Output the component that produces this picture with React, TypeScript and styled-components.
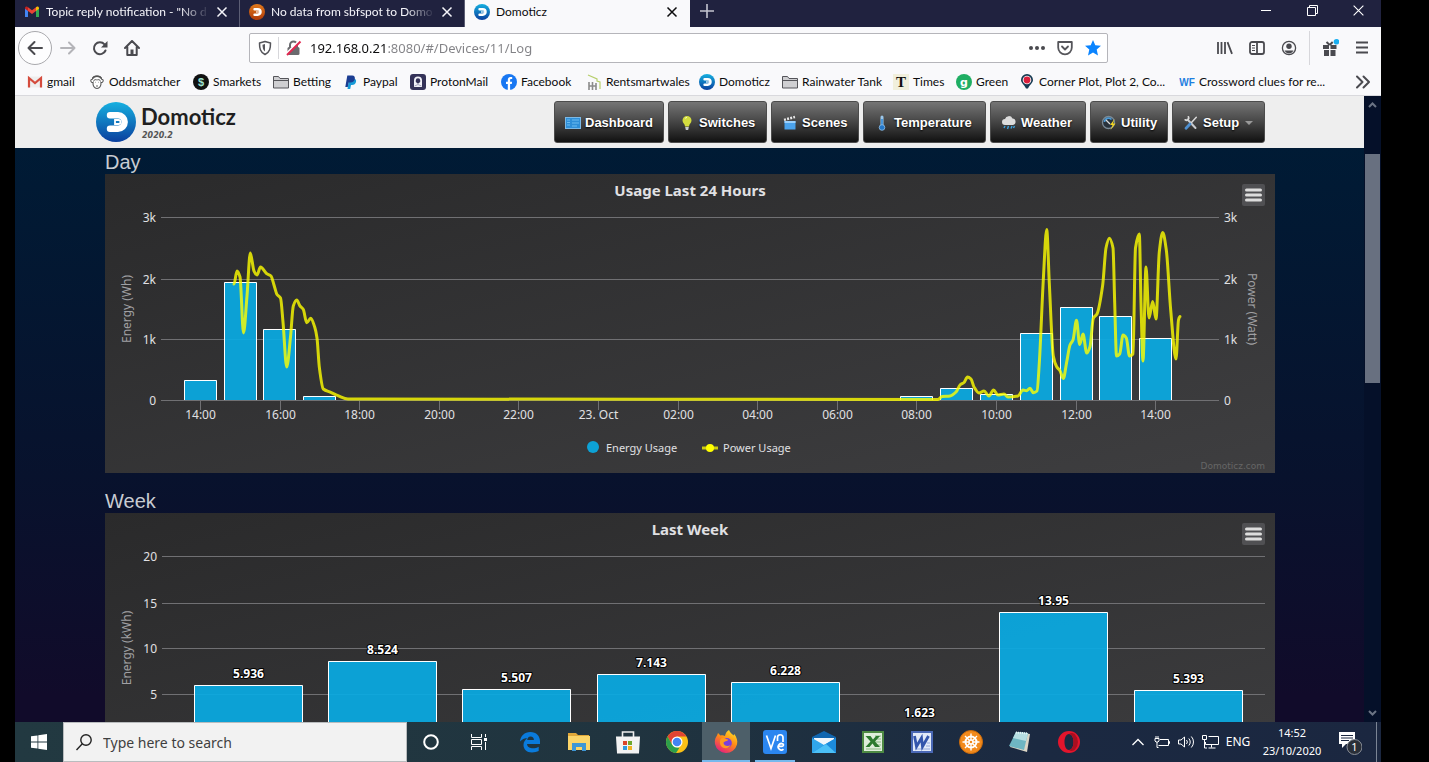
import React from "react";
import styled, { createGlobalStyle, css } from "styled-components";

const UI = `"Noto Sans", "Open Sans", sans-serif`;
const CHROME = `Lato, "Noto Sans", sans-serif`;
const ARIAL = `"Liberation Sans", Arial, sans-serif`;

const GlobalStyle = createGlobalStyle`
  *, *::before, *::after { box-sizing: border-box; }
  body { margin: 0; background: #000; font-family: ${UI}; overflow: hidden; }
  button { font: inherit; color: inherit; background: none; border: 0; padding: 0; cursor: pointer; }
  a { color: inherit; text-decoration: none; }
  svg { display: block; flex: none; }
  h1, h2, p { margin: 0; }
`;

/* ---------- window ---------- */

const Desktop = styled.div`
  display: flex;
  flex-direction: column;
  height: 100vh;
  padding: 0 48px 0 15px;
`;

const TabStrip = styled.div`
  display: flex;
  height: 27px;
  background: #20223f;
  color: #f5f5fa;
`;

const Tab = styled.div<{ $active?: boolean }>`
  display: flex;
  align-items: center;
  gap: 6px;
  flex: 0 1 225px;
  min-width: 0;
  height: 27px;
  padding: 0 11px 3px 9px;
  font-family: ${CHROME};
  font-size: 12px;
  line-height: 16px;
  border-right: 1px solid #5c5e74;
  ${(p) =>
    p.$active &&
    css`
      background: #f9f9fb;
      color: #0c0c0d;
      border-right-color: #f9f9fb;
    `}
`;

const TabLabel = styled.span<{ $fade?: boolean }>`
  flex: 1;
  min-width: 0;
  overflow: hidden;
  white-space: nowrap;
  ${(p) => p.$fade && css`mask-image: linear-gradient(to right, #000 82%, transparent);`}
`;

const PlainButton = styled.button`
  display: flex;
  align-items: center;
  justify-content: center;
  flex: none;
`;

const NewTab = styled(PlainButton)`
  width: 34px;
  padding-bottom: 6px;
  color: #c4c5d0;
`;

const WindowButtons = styled.div`
  display: flex;
  margin-left: auto;
`;

const WindowButton = styled(PlainButton)`
  width: 46px;
  padding-bottom: 6px;
  color: #fff;
`;

const Toolbar = styled.div`
  display: flex;
  align-items: center;
  height: 41px;
  padding: 0 3px;
  background: #f9f9fb;
  color: #4a4a4f;
`;

const ToolButton = styled(PlainButton)<{ $faint?: boolean }>`
  width: 32px;
  height: 32px;
  color: ${(p) => (p.$faint ? "#b4b4b8" : "#4a4a4f")};
`;

const BackButton = styled(PlainButton)`
  width: 34px;
  height: 34px;
  border: 1px solid #a9a9ad;
  border-radius: 50%;
  background: #fdfdfe;
`;

const AddressBar = styled.div`
  display: flex;
  align-items: center;
  flex: 1;
  min-width: 0;
  height: 30px;
  margin: 0 101px;
  padding: 0 6px 0 8px;
  border: 1px solid #b5b5ba;
  border-radius: 2px;
  background: #fff;
`;

const Divider = styled.span<{ $h: number; $gap: number }>`
  flex: none;
  width: 1px;
  height: ${(p) => p.$h}px;
  margin: 0 ${(p) => p.$gap}px;
  background: #d7d7db;
`;

const UrlInput = styled.input`
  flex: 1;
  min-width: 0;
  height: 24px;
  margin-left: 8px;
  padding: 0;
  border: 0;
  outline: 0;
  font: 13px/24px ${UI};
  color: transparent;
  background: linear-gradient(to right, #0c0c0d 76px, #828286 76px);
  background-clip: text;
  -webkit-background-clip: text;
`;

const UrlActions = styled.div`
  display: flex;
  align-items: center;
  gap: 12px;
`;

const Bookmarks = styled.nav`
  display: flex;
  align-items: center;
  height: 28px;
  padding: 0 10px 0 12px;
  background: #f9f9fb;
  border-bottom: 1px solid #d9d9dd;
  color: #0c0c0d;
  font-family: ${CHROME};
  font-size: 12px;
  line-height: 16px;
`;

const Bookmark = styled.a<{ $w: number }>`
  display: flex;
  align-items: center;
  gap: 4px;
  flex: 0 0 ${(p) => p.$w}px;
  white-space: nowrap;
`;

const Overflow = styled(PlainButton)`
  margin-left: auto;
  color: #4a4a4f;
`;

/* ---------- page ---------- */

const Viewport = styled.div`
  display: flex;
  flex: 1;
  min-height: 0;
  background: linear-gradient(to bottom, #001b35 50px, #08122d 380px, #110b2a 600px);
`;

const Page = styled.main`
  flex: 1;
  min-width: 0;
  overflow: hidden;
`;

const Header = styled.header`
  height: 52px;
  padding-left: 1px;
  background: #eee;
`;

const HeaderInner = styled.div`
  display: flex;
  align-items: center;
  justify-content: space-between;
  max-width: 1188px;
  height: 52px;
  margin: 0 auto;
  padding-right: 19px;
`;

const Brand = styled.a`
  display: flex;
  align-items: center;
  gap: 5px;
  color: #1f1f1f;
`;

const BrandName = styled.span`
  display: block;
  font: bold 22px/28px Lato, sans-serif;
`;

const BrandVersion = styled.span`
  display: block;
  padding-left: 1px;
  font: italic bold 8px/10px "DejaVu Sans", sans-serif;
  color: #555;
`;

const Menu = styled.nav`
  display: flex;
  gap: 4px;
`;

const MenuButton = styled.button<{ $w: number }>`
  display: flex;
  align-items: center;
  gap: 4px;
  width: ${(p) => p.$w}px;
  height: 42px;
  padding: 1px 0 0 10px;
  border: 1px solid #4c4c4c;
  border-radius: 3px;
  background: linear-gradient(to bottom, #757575, #454545 50%, #111);
  color: #fff;
  font: bold 13px/20px ${ARIAL};
  text-shadow: 0 1px 2px #000;
`;

const Caret = styled.span`
  margin-left: 2px;
  border: 4px solid transparent;
  border-top-color: #999;
  border-bottom: 0;
`;

const Content = styled.div`
  padding-left: 1px;
`;

const Section = styled.section`
  max-width: 1170px;
  margin: 0 auto 14px;
`;

const Heading = styled.h1`
  height: 26px;
  font: 20px/28px ${ARIAL};
  color: #c8ccd2;
`;

const ChartBox = styled.div`
  position: relative;
`;

const ChartSvg = styled.svg`
  width: 100%;
  height: auto;
  font-family: ${UI};
`;

const ChartMenu = styled(PlainButton)`
  position: absolute;
  top: 10px;
  right: 10px;
  width: 23px;
  height: 22px;
  border-radius: 2px;
  background: #505053;
`;

const ScrollTrack = styled.div`
  display: flex;
  flex-direction: column;
  align-items: center;
  width: 17px;
  padding: 6px 0;
  background: #051029;
  color: #6b7384;
`;

const ScrollThumb = styled.div`
  width: 15px;
  height: 229px;
  margin: 46px 0 auto;
  background: #687080;
`;

/* ---------- taskbar ---------- */

const Taskbar = styled.footer`
  display: flex;
  height: 40px;
  background: linear-gradient(to right, #223941, #20343f 45%, #1b2941 75%, #1b2740);
  color: #fff;
`;

const TaskButton = styled(PlainButton)<{ $active?: boolean; $running?: boolean }>`
  width: 48px;
  height: 40px;
  ${(p) =>
    p.$active &&
    css`
      background: #4d5f69;
      box-shadow: inset 0 -2px #76b9ed;
    `}
  ${(p) =>
    p.$running &&
    css`
      background: linear-gradient(#76b9ed, #76b9ed) center bottom / 40px 2px no-repeat;
    `}
`;

const SearchBox = styled.label`
  display: flex;
  align-items: center;
  gap: 11px;
  flex: 0 1 344px;
  padding-left: 12px;
  border: 1px solid #b9bcbe;
  background: #f2f2f2;
  color: #222;
`;

const SearchInput = styled.input`
  flex: 1;
  min-width: 0;
  border: 0;
  outline: 0;
  padding: 2px 0 0;
  background: none;
  font: 14px/20px ${UI};
  &::placeholder { color: #3f3f3f; opacity: 1; }
`;

const Apps = styled.div`
  display: flex;
  gap: 1px;
  margin-left: 3px;
`;

const Tray = styled.div`
  display: flex;
  align-items: center;
  margin-left: auto;
  font-size: 12px;
  line-height: 18px;
  border-right: 1px solid #7b8494;
  margin-right: 4px;
`;

const TrayButton = styled(PlainButton)<{ $w?: number }>`
  width: ${(p) => p.$w ?? 24}px;
  height: 40px;
`;

const Notifications = styled(TrayButton)`
  padding-right: 8px;
`;

const Clock = styled.button`
  width: 76px;
  font-size: 11px;
  text-align: center;
`;

/* ---------- small icons ---------- */

type LogoProps = { size: number; orange?: boolean };

function DomoticzLogo({ size, orange }: LogoProps) {
  const id = `dz-${size}-${orange ? "o" : "b"}`;
  return (
    <svg width={size} height={size} viewBox="0 0 40 40" aria-hidden="true">
      <defs>
        <linearGradient id={id} x1="0" y1="0" x2="0" y2="1">
          <stop offset="0" stopColor={orange ? "#e07a1c" : "#16b0e0"} />
          <stop offset="1" stopColor={orange ? "#b03a08" : "#0a3f9e"} />
        </linearGradient>
      </defs>
      <circle cx="20" cy="20" r="20" fill={`url(#${id})`} />
      <path d="M14 13.3h8a6.7 6.7 0 0 1 0 13.4h-8" fill="none" stroke="#fff" strokeWidth="6.4" strokeLinecap="round" />
      <path d="M19 18h3.500a2 2 0 0 1 0 4H19z" fill="none" stroke="#fff" strokeWidth="1.800" />
    </svg>
  );
}

const GmailColor = () => (
  <svg width="16" height="16" viewBox="0 0 16 16">
    <path d="M1 13V4l3 2.300V13z" fill="#4285f4" />
    <path d="M12 13V6.300L15 4v9z" fill="#34a853" />
    <path d="M4 3.300l4 3 4-3v3.600l-4 3-4-3z" fill="#ea4335" />
    <path d="M1 4.200C1 2.500 3 2 4 3.300v3.600L1 4.800z" fill="#c5221f" />
    <path d="M15 4.200c0-1.700-2-2.200-3-.900v3.600l3-2.100z" fill="#fbbc04" />
  </svg>
);

const GmailOld = () => (
  <svg width="16" height="16" viewBox="0 0 16 16">
    <path d="M1 2.500h14v11H1z" fill="#eee" />
    <path d="M2 13.500V4l6 5 6-5v9.500" fill="none" stroke="#d54b3d" strokeWidth="2.200" />
  </svg>
);

const Ape = () => (
  <svg width="16" height="16" viewBox="0 0 16 16" fill="none" stroke="#555" strokeWidth="1.100">
    <path d="M4 8.500C1.500 9 1 5 3.300 5.300 3.500 3 6 2 8 2s4.500 1 4.700 3.300c2.300-.3 1.800 3.700-.7 3.200.3 3.500-1.500 6-4 6s-4.300-2.500-4-6z" fill="#fff" />
    <path d="M4.500 7.500c0-2 3-2.500 3.500-1.200.5-1.300 3.500-.8 3.500 1.200M6 8.300h.5M9.500 8.300h.5M7 12h2" strokeWidth=".9" />
    <path d="M3.800 4.500C5 1.500 11 1.500 12.200 4.500" strokeWidth="1.600" />
  </svg>
);

const Round = ({ bg, fg, text, font }: { bg: string; fg: string; text: string; font?: string }) => (
  <svg width="16" height="16" viewBox="0 0 16 16">
    <circle cx="8" cy="8" r="8" fill={bg} />
    <text x="8" y="12" textAnchor="middle" fontSize="11" fontWeight="bold" fontFamily={font ?? "Liberation Sans"} fill={fg}>{text}</text>
  </svg>
);

const Folder = () => (
  <svg width="16" height="16" viewBox="0 0 16 16" fill="#cfcfd2" stroke="#55555a" strokeWidth="1">
    <path d="M.5 14V2.500h5l1.500 2h8.500V14z" />
    <path d="M.5 6.500h15" />
  </svg>
);

const Paypal = () => (
  <svg width="16" height="16" viewBox="0 0 16 16">
    <path d="M6 5h6c2 .5 1.500 6-3 6H8l-.8 4H4.500z" fill="#179bd7" />
    <path d="M4.300 1.500h5c4 0 3.500 7-2 7H5.600L4.800 13H2.300z" fill="#1b3d92" />
  </svg>
);

const Proton = () => (
  <svg width="16" height="16" viewBox="0 0 16 16">
    <rect width="16" height="16" rx="3" fill="#343258" />
    <path d="M4 13V6.500a4 4 0 0 1 8 0V13z" fill="#f2f2f8" />
    <path d="M5.800 8V6.500a2.200 2.200 0 0 1 4.400 0V8l-2.200 1.800z" fill="#343258" />
    <path d="M4.500 12l3.500-1.500 3.500 1.500" stroke="#a6a5bd" fill="none" />
  </svg>
);

const Facebook = () => (
  <svg width="16" height="16" viewBox="0 0 16 16">
    <circle cx="8" cy="8" r="8" fill="#1877f2" />
    <path d="M6.800 16V10H5V7.700h1.800V6c0-2 1.200-3 2.900-3l1.500.1v2h-1c-.9 0-1.100.5-1.100 1.100v1.500h2L10.800 10H9.100v6z" fill="#fff" />
  </svg>
);

const Rent = () => (
  <svg width="16" height="16" viewBox="0 0 16 16" fill="none">
    <path d="M2 1l9 4v2l3 1v7" stroke="#b7cf6c" strokeWidth="1.200" />
    <path d="M3 8v8M6.500 8v8M3 12h7M10 9v7" stroke="#8b8b8b" strokeWidth="1.600" />
  </svg>
);

const TimesIcon = () => (
  <svg width="16" height="16" viewBox="0 0 16 16">
    <rect width="16" height="16" fill="#f1efdc" />
    <text x="8" y="13" textAnchor="middle" fontSize="15" fontWeight="bold" fontFamily="Liberation Serif" fill="#111">T</text>
  </svg>
);

const PinIcon = () => (
  <svg width="16" height="16" viewBox="0 0 16 16">
    <path d="M8 0a6 6 0 0 1 6 6c0 3-3.500 5-5 8.500H7C5.500 11 2 9 2 6a6 6 0 0 1 6-6z" fill="#163a52" />
    <circle cx="8" cy="6" r="4.300" fill="#fff" />
    <circle cx="8" cy="6" r="3.400" fill="#d91f3c" />
  </svg>
);

const WFIcon = () => (
  <svg width="16" height="16" viewBox="0 0 16 16">
    <text x="8" y="12" textAnchor="middle" fontSize="10" fontWeight="bold" fontFamily="Liberation Sans" fill="#1f7fe0">WF</text>
  </svg>
);

const CloseX = ({ size = 12, w = 1.5 }: { size?: number; w?: number }) => (
  <svg width={size} height={size} viewBox="0 0 12 12" stroke="currentColor" strokeWidth={w}>
    <path d="M1.500 1.500l9 9M10.500 1.500l-9 9" />
  </svg>
);

const bookmarks: { label: string; w: number; icon: React.ReactNode }[] = [
  { label: "gmail", w: 62, icon: <GmailOld /> },
  { label: "Oddsmatcher", w: 104, icon: <Ape /> },
  { label: "Smarkets", w: 80, icon: <Round bg="#111" fg="#9fe3d2" text="$" /> },
  { label: "Betting", w: 70, icon: <Folder /> },
  { label: "Paypal", w: 67, icon: <Paypal /> },
  { label: "ProtonMail", w: 91, icon: <Proton /> },
  { label: "Facebook", w: 85, icon: <Facebook /> },
  { label: "Rentsmartwales", w: 113, icon: <Rent /> },
  { label: "Domoticz", w: 83, icon: <DomoticzLogo size={16} /> },
  { label: "Rainwater Tank", w: 111, icon: <Folder /> },
  { label: "Times", w: 63, icon: <TimesIcon /> },
  { label: "Green", w: 63, icon: <Round bg="#1fae63" fg="#fff" text="g" font="DejaVu Sans" /> },
  { label: "Corner Plot, Plot 2, Co...", w: 160, icon: <PinIcon /> },
  { label: "Crossword clues for re...", w: 150, icon: <WFIcon /> },
];

/* ---------- page menu icons ---------- */

const menu: { label: string; w: number; caret?: boolean; icon: React.ReactNode }[] = [
  {
    label: "Dashboard",
    w: 110,
    icon: (
      <svg width="16" height="16" viewBox="0 0 16 16">
        <rect x=".5" y="2.500" width="15" height="11" fill="#2f8fd8" stroke="#7cb9e6" />
        <path d="M2 5h3M2 7.500h3M2 10h3M7 5h7M7 8h7M7 11h5" stroke="#6dbcf0" />
      </svg>
    ),
  },
  {
    label: "Switches",
    w: 99,
    icon: (
      <svg width="16" height="16" viewBox="0 0 16 16">
        <path d="M8 1a4.500 4.500 0 0 1 4.500 4.500C12.500 8 10 9 10 11.500H6C6 9 3.500 8 3.500 5.500A4.500 4.500 0 0 1 8 1z" fill="#d3dc3f" />
        <path d="M6 3.500a2.500 2.500 0 0 1 2-1" stroke="#fbffc0" fill="none" />
        <path d="M6.200 12h3.600l-.6 3H6.800z" fill="#c9ccd0" />
      </svg>
    ),
  },
  {
    label: "Scenes",
    w: 88,
    icon: (
      <svg width="16" height="16" viewBox="0 0 16 16">
        <path d="M2.500 6h11v8.500h-11z" fill="#4ba3ec" />
        <path d="M2.500 6h11v2h-11z" fill="#9bd0fb" />
        <path d="M2 4.800L13 2" stroke="#e8e8e8" strokeWidth="2.400" strokeDasharray="2 1.200" />
      </svg>
    ),
  },
  {
    label: "Temperature",
    w: 123,
    icon: (
      <svg width="16" height="16" viewBox="0 0 16 16">
        <path d="M8 2v9" stroke="#9cc7ea" strokeWidth="3" strokeLinecap="round" />
        <path d="M8 4v8" stroke="#2e86d4" strokeWidth="1.500" />
        <circle cx="8" cy="12.500" r="2.800" fill="#2477c8" stroke="#8fc0ea" strokeWidth=".8" />
      </svg>
    ),
  },
  {
    label: "Weather",
    w: 96,
    icon: (
      <svg width="16" height="16" viewBox="0 0 16 16">
        <path d="M4 10a3 3 0 0 1 0-6 4 4 0 0 1 7.500-.500A3.300 3.300 0 0 1 12 10z" fill="#dcdcdc" />
        <path d="M4 11l-1 2M7.500 11l-1 3M11 11l-1 2.500M13.500 11l-1 2" stroke="#3aa0dd" strokeWidth="1.400" />
      </svg>
    ),
  },
  {
    label: "Utility",
    w: 78,
    icon: (
      <svg width="16" height="16" viewBox="0 0 16 16">
        <circle cx="7.500" cy="7.500" r="6" fill="#28323c" stroke="#7b8b97" strokeWidth="1.300" />
        <path d="M3.500 7a4 4 0 0 1 7-2.500" stroke="#4d9bd6" strokeWidth="1.600" fill="none" />
        <path d="M5 5l4 4" stroke="#ddd" strokeWidth="1.300" />
        <path d="M13.500 4L9 10h2.500L9.500 15l5-6.500H12z" fill="#f3d522" />
      </svg>
    ),
  },
  {
    label: "Setup",
    w: 93,
    caret: true,
    icon: (
      <svg width="16" height="16" viewBox="0 0 16 16" fill="none" strokeLinecap="round">
        <path d="M4.500 4.500l8 8.500" stroke="#c9ccd0" strokeWidth="2" />
        <path d="M2.200 4.800a2.300 2.300 0 0 0 3-.3 2.300 2.300 0 0 0 .2-2.700" stroke="#dadada" strokeWidth="1.700" />
        <path d="M13.300 2.300L8.500 7.500" stroke="#d9d9d9" strokeWidth="1.500" />
        <path d="M7 9l-4 4.200" stroke="#4e8fd0" strokeWidth="2.800" />
      </svg>
    ),
  },
];

/* ---------- charts ---------- */

const AXIS = "#e0e0e3";
const GRID = "#707073";
const BAR = "#0aaae2";

function ChartBackground({ id }: { id: string }) {
  return (
    <>
      <defs>
        <linearGradient id={id} x1="0" y1="0" x2="1" y2="1">
          <stop offset="0" stopColor="#2a2a2b" />
          <stop offset="1" stopColor="#3e3e40" />
        </linearGradient>
      </defs>
      <rect width="1170" height="299" fill={`url(#${id})`} />
    </>
  );
}

const ChartMenuButton = () => (
  <ChartMenu aria-label="Chart context menu">
    <svg width="17" height="14" viewBox="0 0 17 14" stroke="#ddd" strokeWidth="3" strokeLinecap="round">
      <path d="M1.500 2h14M1.500 7h14M1.500 12h14" />
    </svg>
  </ChartMenu>
);

const dayTicks = ["14:00", "16:00", "18:00", "20:00", "22:00", "23. Oct", "02:00", "04:00", "06:00", "08:00", "10:00", "12:00", "14:00"];

// [hours since 14:00, height above the axis]
const dayBars: [number, number][] = [
  [0, 20], [1, 118], [2, 71], [3, 4], [18, 4], [19, 12], [20, 6], [21, 67], [22, 93], [23, 84], [24, 62],
];

const powerLine: [number, number][] = [
  [129, 110], [132, 97], [135, 103], [138.5, 159], [142, 122], [145.3, 79], [149, 97], [152, 101], [155.5, 93], [161.5, 99.5],
  [166, 102], [169, 111], [172, 120.5], [175.500, 124], [178, 148], [181.700, 193], [185.5, 163], [188.300, 132], [191.700, 126],
  [195, 132], [198.300, 135.500], [201.700, 148.700], [205.700, 144.300], [209.700, 153], [212, 164], [214.300, 193], [218.300, 215],
  [225.700, 218.300], [233, 221.700], [243, 225], [260, 225], [833, 225.5], [837, 222.500], [845, 222], [851, 218], [855, 211],
  [859, 208.500], [862.5, 203], [866, 205], [869, 213], [874, 219], [879, 217], [884, 222], [888.500, 216], [893, 221],
  [899, 220], [903, 223], [913, 222], [918, 216], [921.5, 216.700], [925, 214.300], [928.300, 218.700], [932, 217], [934.300, 189],
  [938.300, 106], [941.700, 55.5], [944.300, 109], [948.300, 182], [951.700, 192.700], [955, 196.700], [958.300, 204.5],
  [961.700, 188], [965, 171], [968, 166], [971.5, 146.300], [974.700, 170.500], [978, 160], [981.700, 179], [985, 172.700],
  [988.300, 144.300], [992, 140], [997.700, 111], [1001, 74], [1004.300, 64.300], [1008, 74], [1009.700, 129], [1011.500, 182],
  [1014.700, 180], [1018, 161], [1021.300, 164], [1024.500, 182], [1028, 180], [1030.500, 74], [1034.300, 60], [1036, 129],
  [1038, 187], [1041, 93], [1044, 144], [1047.700, 127.500], [1051, 145], [1054.300, 78], [1057.700, 58.5], [1061.300, 76],
  [1065.700, 136], [1071, 185], [1073.5, 146], [1075, 142.500],
];

// Smooth curve whose control points stay level at every peak and trough.
function spline(points: [number, number][]) {
  const slope = points.map((p, i) => {
    const a = points[i - 1];
    const b = points[i + 1];
    if (!a || !b) return 0;
    const left = (p[1] - a[1]) / (p[0] - a[0]);
    const right = (b[1] - p[1]) / (b[0] - p[0]);
    return left * right <= 0 ? 0 : (2 * left * right) / (left + right);
  });
  return points
    .map((p, i) => {
      if (i === 0) return `M${p[0]} ${p[1]}`;
      const a = points[i - 1];
      const h = (p[0] - a[0]) / 3;
      return `C${a[0] + h} ${a[1] + h * slope[i - 1]} ${p[0] - h} ${p[1] - h * slope[i]} ${p[0]} ${p[1]}`;
    })
    .join("");
}

function DayChart() {
  const rows: [string, number][] = [["3k", 43.5], ["2k", 105.5], ["1k", 165.5], ["0", 226.5]];
  return (
    <ChartBox>
      <ChartSvg viewBox="0 0 1170 299" role="img" aria-label="Usage Last 24 Hours">
        <ChartBackground id="day-bg" />
        <text x="585" y="22" textAnchor="middle" fontSize="15" fontWeight="bold" fill={AXIS}>Usage Last 24 Hours</text>
        {rows.map(([label, y]) => (
          <g key={label} fontSize="12" fill={AXIS}>
            <path d={`M56 ${y}H1114`} stroke={GRID} />
            <text x="51" y={y + 4} textAnchor="end">{label}</text>
            <text x="1119" y={y + 4}>{label}</text>
          </g>
        ))}
        <text transform="translate(26 135) rotate(-90)" textAnchor="middle" fontSize="12" fill="#a0a0a3">Energy (Wh)</text>
        <text transform="translate(1143 135) rotate(90)" textAnchor="middle" fontSize="12" fill="#a0a0a3">Power (Watt)</text>
        {dayTicks.map((label, i) => {
          const x = Math.round(95 + i * 79.6);
          return (
            <g key={i}>
              <path d={`M${x + 0.5} 227v9`} stroke={GRID} />
              <text x={x + 0.5} y="245" textAnchor="middle" fontSize="12" fill={AXIS}>{label}</text>
            </g>
          );
        })}
        {dayBars.map(([hour, h]) => {
          const x = Math.floor(79.3 + hour * 39.81) + 0.5;
          return (
            <g key={hour}>
              <rect x={x} y={226 - h} width="32" height={h} fill={BAR} opacity=".93" />
              <path d={`M${x} 226V${226.5 - h}h32V226`} fill="none" stroke="#fff" />
            </g>
          );
        })}
        <path d={spline(powerLine)} fill="none" stroke="#ff0" strokeOpacity=".8" strokeWidth="3" strokeLinecap="round" strokeLinejoin="round" />
        <g fontSize="11" fill={AXIS}>
          <circle cx="488" cy="273" r="6" fill={BAR} fillOpacity=".93" />
          <text x="501" y="278">Energy Usage</text>
          <path d="M597 274h16" stroke="#ff0" strokeOpacity=".75" strokeWidth="3" />
          <circle cx="605" cy="274" r="4" fill="#ff0" />
          <text x="618" y="278">Power Usage</text>
        </g>
        <text x="1160" y="295" textAnchor="end" fontSize="9" fontFamily="DejaVu Sans" fill="#666">Domoticz.com</text>
      </ChartSvg>
      <ChartMenuButton />
    </ChartBox>
  );
}

const weekValues = [5.936, 8.524, 5.507, 7.143, 6.228, 1.623, 13.95, 5.393];

function WeekChart() {
  const rows: [number, number][] = [[20, 43.5], [15, 90.5], [10, 135.5], [5, 181.5], [0, 226.5]];
  return (
    <ChartBox>
      <ChartSvg viewBox="0 0 1170 299" role="img" aria-label="Last Week">
        <ChartBackground id="week-bg" />
        <text x="585" y="22" textAnchor="middle" fontSize="15" fontWeight="bold" fill={AXIS}>Last Week</text>
        {rows.map(([label, y]) => (
          <g key={label} fontSize="12" fill={AXIS}>
            <path d={`M57 ${y}H1160`} stroke={GRID} />
            <text x="52" y={y + 4} textAnchor="end">{label}</text>
          </g>
        ))}
        <text transform="translate(26 135) rotate(-90)" textAnchor="middle" fontSize="12" fill="#a0a0a3">Energy (kWh)</text>
        {weekValues.map((value, i) => {
          const x = Math.floor(89.15 + i * 134.3) + 0.5;
          const h = Math.round(value * 9.1);
          return (
            <g key={value}>
              <rect x={x} y={226 - h} width="108" height={h} fill={BAR} opacity=".93" />
              <path d={`M${x} 226V${226.5 - h}h108V226`} fill="none" stroke="#fff" />
              <text x={x + 54} y={219 - h} textAnchor="middle" fontSize="12" fontWeight="bold" fill="#fff" stroke="#000" strokeWidth="2" strokeLinejoin="round" paintOrder="stroke">{value}</text>
            </g>
          );
        })}
      </ChartSvg>
      <ChartMenuButton />
    </ChartBox>
  );
}

/* ---------- taskbar icons ---------- */

const apps: { name: string; active?: boolean; running?: boolean; icon: React.ReactNode }[] = [
  {
    name: "Microsoft Edge",
    icon: (
      <svg width="22" height="22" viewBox="0 0 22 22">
        <path d="M1 10.500C1.500 5 5.500 1 11.300 1 17.500 1 21 5.200 21 10.200V13H8c.2 3 3 4.300 6 4.300 2 0 4-.5 5.700-1.500v4.300C18 21 15.500 21.500 13 21.500 7.500 21.500 4.500 18 4.500 14c0-3 1.500-5.500 4.500-7-3.500.200-6.500 1.500-8 3.500zM8.200 9h6.700c0-2.200-1.200-3.400-3.300-3.400S8.500 7 8.200 9z" fill="#0a7bdc" />
      </svg>
    ),
  },
  {
    name: "File Explorer",
    icon: (
      <svg width="22" height="22" viewBox="0 0 22 22">
        <path d="M0 2h8l2 2h11v4H0z" fill="#e0a83a" />
        <path d="M0 5h22v14H0z" fill="#fbd569" />
        <path d="M4 12h14v8h-4v-4H8v4H4z" fill="#3f97d6" />
      </svg>
    ),
  },
  {
    name: "Microsoft Store",
    icon: (
      <svg width="24" height="24" viewBox="0 0 24 24">
        <path d="M6.500 7V2h11v5" fill="none" stroke="#eee" strokeWidth="1.600" />
        <path d="M0 6.500h24L23 23.500H1z" fill="#f3f3f3" />
        <path d="M7 11h4v4H7z" fill="#d9452b" /><path d="M12 11h4v4h-4z" fill="#6fa82e" />
        <path d="M7 16h4v4H7z" fill="#2f9be0" /><path d="M12 16h4v4h-4z" fill="#f0b323" />
      </svg>
    ),
  },
  {
    name: "Google Chrome",
    icon: (
      <svg width="22" height="22" viewBox="0 0 22 22">
        <circle cx="11" cy="11" r="11" fill="#fbc116" />
        <path d="M1.500 5.500A11 11 0 0 1 20.500 5.500H11L6.200 13.700z" fill="#e04433" />
        <path d="M1.500 5.500L6.200 13.700 11 16.500l2.500.3-3.500 5.200A11 11 0 0 1 1.500 5.500z" fill="#2c9f4b" />
        <circle cx="11" cy="11" r="5.500" fill="#fff" />
        <circle cx="11" cy="11" r="4.300" fill="#4284f3" />
      </svg>
    ),
  },
  {
    name: "Firefox",
    active: true,
    icon: (
      <svg width="24" height="24" viewBox="0 0 24 24">
        <defs>
          <linearGradient id="fx" x1=".8" y1="0" x2=".2" y2="1">
            <stop offset="0" stopColor="#ffe226" />
            <stop offset=".45" stopColor="#ff8a16" />
            <stop offset="1" stopColor="#e31587" />
          </linearGradient>
        </defs>
        <path d="M15 0c1 3 3 3.500 4.500 5.500l.7-1.500C22.500 7 24 10.500 23 14.500A11.300 11.300 0 0 1 1 14c-.8-4 .8-7 2-8.500L4 3l2.500 2.500c2-.5 3-.3 4.500.5.500-3 2-5 4-6z" fill="url(#fx)" />
        <circle cx="12.800" cy="13" r="5" fill="#7a3fdc" />
        <path d="M7 8.500c2-1 4-.5 5 .5 1 .2 2 .3 2 1-.5 1.500-4 1-4.500 3 .5 3 4.500 4 7 2-1 4-8 4.500-10 0-1-2.500-.7-4.500.500-6.500z" fill="#ff9a1f" />
      </svg>
    ),
  },
  {
    name: "VNC Viewer",
    running: true,
    icon: (
      <svg width="24" height="24" viewBox="0 0 24 24" fill="none" stroke="#fff" strokeWidth="1.700">
        <rect width="24" height="24" rx="3" fill="#2b86f0" stroke="none" />
        <path d="M3.500 5.500L8 18.500l4.500-13" />
        <path d="M14.500 11V7.500a2.500 2.500 0 0 1 5.500 0V12M20.500 19.200a3.200 3.200 0 1 1-.6-5.200c1 .8.500 2.300-1 2.300h-4" />
      </svg>
    ),
  },
  {
    name: "Mail",
    icon: (
      <svg width="24" height="24" viewBox="0 0 24 24">
        <path d="M0 7l12-6 12 6v5H0z" fill="#1066b0" />
        <path d="M2 8h20v8H2z" fill="#f1f6fb" />
        <path d="M0 8l12 7 12-7v15H0z" fill="#30a6ec" />
        <path d="M0 23l12-8 12-7v15z" fill="#1c8bdc" />
        <path d="M0 23L14 14l10 9z" fill="#4bc0f7" />
      </svg>
    ),
  },
  {
    name: "Excel",
    icon: (
      <svg width="22" height="22" viewBox="0 0 22 22">
        <rect x="1" y="1" width="20" height="20" fill="#dfeedb" stroke="#4d8a43" strokeWidth="2" />
        <path d="M13 5h6M13 8h6M13 11h6M13 14h6M4 18h15" stroke="#8db985" />
        <path d="M3.500 5h5l2.500 3.500L14 5h4l-5 5.500L18 16h-5l-2.500-3.500L7.500 16h-4l5-5.500z" fill="#2d7a2f" />
      </svg>
    ),
  },
  {
    name: "Word",
    icon: (
      <svg width="22" height="22" viewBox="0 0 22 22">
        <rect x="1" y="1" width="20" height="20" fill="#e2eaf8" stroke="#4a68b5" strokeWidth="2" />
        <path d="M4 18h15M15 15h4M16 12h3" stroke="#94a8dc" />
        <path d="M3.500 5l2 10.500L10.500 7l1 8.500L17.500 5" fill="none" stroke="#3355ac" strokeWidth="2.800" />
      </svg>
    ),
  },
  {
    name: "OpenCPN",
    icon: (
      <svg width="24" height="24" viewBox="0 0 24 24" fill="none" stroke="#fff">
        <circle cx="12" cy="12" r="11.500" fill="#f28a1c" stroke="#c96a0c" />
        <circle cx="12" cy="12" r="5.500" strokeWidth="2" />
        <path d="M12 3.500v17M3.500 12h17M6 6l12 12M18 6L6 18" strokeWidth="1.400" />
        <circle cx="12" cy="12" r="2" fill="#f28a1c" strokeWidth="1.500" />
      </svg>
    ),
  },
  {
    name: "Notepad",
    icon: (
      <svg width="24" height="24" viewBox="0 0 24 24">
        <path d="M8 2l14 2-3 18L2 17z" fill="#dcd6c6" />
        <path d="M8 2l12 1-4 17L1 16z" fill="#6fb6c2" />
        <path d="M8 2l12 1-2 8L5 8z" fill="#b6dee2" />
        <path d="M8 2.500l12 1" stroke="#e7f5f6" strokeWidth="2" strokeDasharray="1 1" />
      </svg>
    ),
  },
  {
    name: "Opera",
    icon: (
      <svg width="22" height="22" viewBox="0 0 22 22">
        <path fillRule="evenodd" d="M11 0a11 11 0 1 1 0 22 11 11 0 0 1 0-22zm0 3C8 3 6.500 7 6.500 11s1.500 8 4.500 8 4.500-4 4.500-8S14 3 11 3z" fill="#e3152c" />
        <path d="M11 19c3 0 4.500-4 4.500-8S14 3 11 3c1.500-1.500 5-1 6 .500a11 11 0 0 1 0 15c-1 1.500-4.500 2-6 .500z" fill="#a90f20" />
      </svg>
    ),
  },
];

export default function App() {
  return (
    <>
      <GlobalStyle />
      <Desktop>
        <TabStrip>
          <Tab>
            <GmailColor />
            <TabLabel $fade>Topic reply notification - "No d</TabLabel>
            <PlainButton aria-label="Close tab"><CloseX /></PlainButton>
          </Tab>
          <Tab>
            <DomoticzLogo size={16} orange />
            <TabLabel $fade>No data from sbfspot to Domo</TabLabel>
            <PlainButton aria-label="Close tab"><CloseX /></PlainButton>
          </Tab>
          <Tab $active>
            <DomoticzLogo size={16} />
            <TabLabel>Domoticz</TabLabel>
            <PlainButton aria-label="Close tab"><CloseX /></PlainButton>
          </Tab>
          <NewTab aria-label="New tab">
            <svg width="14" height="14" viewBox="0 0 14 14" stroke="currentColor" strokeWidth="1.600"><path d="M7 0v14M0 7h14" /></svg>
          </NewTab>
          <WindowButtons>
            <WindowButton aria-label="Minimize">
              <svg width="10" height="10" viewBox="0 0 10 10" stroke="currentColor"><path d="M0 4.500h10" /></svg>
            </WindowButton>
            <WindowButton aria-label="Restore">
              <svg width="11" height="11" viewBox="0 0 11 11" stroke="currentColor" fill="none"><path d="M.5 2.500h8v8h-8zM2.500 2.500v-2h8v8h-2" /></svg>
            </WindowButton>
            <WindowButton aria-label="Close"><CloseX size={13} w={1} /></WindowButton>
          </WindowButtons>
        </TabStrip>

        <Toolbar>
          <BackButton aria-label="Back">
            <svg width="16" height="16" viewBox="0 0 16 16" fill="none" stroke="currentColor" strokeWidth="2" strokeLinecap="round" strokeLinejoin="round"><path d="M15 8H1.500M7.500 2l-6 6 6 6" /></svg>
          </BackButton>
          <ToolButton $faint aria-label="Forward">
            <svg width="16" height="16" viewBox="0 0 16 16" fill="none" stroke="currentColor" strokeWidth="2" strokeLinecap="round" strokeLinejoin="round"><path d="M1 8h13.500M9 2.500L14.500 8 9 13.500" /></svg>
          </ToolButton>
          <ToolButton aria-label="Reload">
            <svg width="16" height="16" viewBox="0 0 16 16" fill="none" stroke="currentColor" strokeWidth="2"><path d="M13.500 10.500A6 6 0 1 1 12.500 4.300" strokeLinecap="round" /><path d="M15.500 1v6.500H9z" fill="currentColor" stroke="none" /></svg>
          </ToolButton>
          <ToolButton aria-label="Home">
            <svg width="16" height="16" viewBox="0 0 16 16" fill="none" stroke="currentColor" strokeWidth="2" strokeLinejoin="round" strokeLinecap="round"><path d="M1 8l7-7 7 7M3.300 7v8h9.400V7" /><path d="M6.500 9.500h3V15h-3z" fill="currentColor" stroke="none" /></svg>
          </ToolButton>

          <AddressBar>
            <svg width="14" height="16" viewBox="0 0 14 16" fill="none" stroke="#55555a" strokeWidth="1.500"><path d="M7 1.500L12.500 3c0 5-.5 9-5.500 11.500C2 12 1.500 8 1.500 3z" strokeLinejoin="round" /><path d="M7 4v7.500C5 10 4.500 7.500 4.500 4.700z" fill="#55555a" stroke="none" /></svg>
            <Divider $h={22} $gap={6} />
            <svg width="17" height="16" viewBox="0 0 17 16"><rect x="2.500" y="7" width="12" height="8" rx="1.500" fill="#6a6a6e" /><path d="M5 7V5a3.500 3.500 0 0 1 7 0v2" fill="none" stroke="#6a6a6e" strokeWidth="2" /><path d="M1.500 13.500L14 1" stroke="#fff" strokeWidth="2" /><path d="M2 15L15.500 1.500" stroke="#e22850" strokeWidth="2" /></svg>
            <UrlInput aria-label="Address" defaultValue="192.168.0.21:8080/#/Devices/11/Log" />
            <UrlActions>
              <PlainButton aria-label="Page actions">
                <svg width="16" height="16" viewBox="0 0 16 16" fill="#4a4a4f"><circle cx="2" cy="8" r="2" /><circle cx="8" cy="8" r="2" /><circle cx="14" cy="8" r="2" /></svg>
              </PlainButton>
              <PlainButton aria-label="Save to Pocket">
                <svg width="16" height="16" viewBox="0 0 16 16" fill="none" stroke="#55555a" strokeWidth="1.800" strokeLinecap="round" strokeLinejoin="round"><path d="M1.200 2h13.600v5.500a6.800 6.800 0 0 1-13.600 0z" /><path d="M5 6.500l3 3 3-3" /></svg>
              </PlainButton>
              <PlainButton aria-label="Edit bookmark">
                <svg width="16" height="16" viewBox="0 0 16 16" fill="#0a84ff"><path d="M8 0l2.300 5.300 5.700.5-4.300 3.800 1.300 5.900L8 12.400l-5 3.100 1.300-5.900L0 5.800l5.700-.5z" /></svg>
              </PlainButton>
            </UrlActions>
          </AddressBar>

          <ToolButton aria-label="Library">
            <svg width="16" height="16" viewBox="0 0 16 16" stroke="currentColor" strokeWidth="1.800"><path d="M1 2v12M4.500 2v12M8 2v12M10.500 2.200l4.500 11.600" /></svg>
          </ToolButton>
          <ToolButton aria-label="Sidebars">
            <svg width="16" height="16" viewBox="0 0 16 16" fill="none" stroke="currentColor" strokeWidth="1.800"><rect x="1" y="2" width="14" height="12" rx="2" /><path d="M8 2v12" /><path d="M3 5.500h3M3 8h3M3 10.500h3" strokeWidth="1" /></svg>
          </ToolButton>
          <ToolButton aria-label="Account">
            <svg width="16" height="16" viewBox="0 0 16 16" fill="none" stroke="currentColor" strokeWidth="1.300"><circle cx="8" cy="8" r="6.600" /><circle cx="8" cy="6.300" r="2.700" fill="currentColor" stroke="none" /><path d="M3.500 10.500h9c-1 2-2.700 3-4.500 3s-3.500-1-4.500-3z" fill="currentColor" stroke="none" /></svg>
          </ToolButton>
          <Divider $h={34} $gap={4} />
          <ToolButton aria-label="What's new">
            <svg width="18" height="18" viewBox="0 0 18 18" fill="currentColor"><path d="M2 6h6v4H2zM9.500 6h6v4h-6zM3 11h5v6H3zM9.500 11h5v6h-5z" /><path d="M8.700 6L5.500 3M8.700 6l3-3" stroke="currentColor" strokeWidth="2" /><circle cx="15.500" cy="2.800" r="2.800" fill="#18aef0" /></svg>
          </ToolButton>
          <ToolButton aria-label="Menu">
            <svg width="12" height="13" viewBox="0 0 12 13" stroke="currentColor" strokeWidth="2"><path d="M0 1.500h12M0 6.500h12M0 11.500h12" /></svg>
          </ToolButton>
        </Toolbar>

        <Bookmarks aria-label="Bookmarks">
          {bookmarks.map((b, i) => (
            <Bookmark key={i} href="#" $w={b.w}>{b.icon}{b.label}</Bookmark>
          ))}
          <Overflow aria-label="More bookmarks">
            <svg width="16" height="16" viewBox="0 0 16 16" fill="none" stroke="currentColor" strokeWidth="2" strokeLinecap="round" strokeLinejoin="round"><path d="M2 2.500L7.500 8 2 13.500M8.500 2.500L14 8l-5.500 5.500" /></svg>
          </Overflow>
        </Bookmarks>

        <Viewport>
          <Page>
            <Header>
              <HeaderInner>
                <Brand href="#">
                  <DomoticzLogo size={40} />
                  <span>
                    <BrandName>Domoticz</BrandName>
                    <BrandVersion>2020.2</BrandVersion>
                  </span>
                </Brand>
                <Menu aria-label="Main menu">
                  {menu.map((m) => (
                    <MenuButton key={m.label} $w={m.w}>{m.icon}{m.label}{m.caret && <Caret />}</MenuButton>
                  ))}
                </Menu>
              </HeaderInner>
            </Header>
            <Content>
              <Section>
                <Heading>Day</Heading>
                <DayChart />
              </Section>
              <Section>
                <Heading as="h2">Week</Heading>
                <WeekChart />
              </Section>
            </Content>
          </Page>
          <ScrollTrack>
            <svg width="9" height="6" viewBox="0 0 9 6" fill="none" stroke="currentColor" strokeWidth="2"><path d="M1 5l3.500-3.500L8 5" /></svg>
            <ScrollThumb />
            <svg width="9" height="6" viewBox="0 0 9 6" fill="none" stroke="currentColor" strokeWidth="2"><path d="M1 1l3.500 3.500L8 1" /></svg>
          </ScrollTrack>
        </Viewport>

        <Taskbar>
          <TaskButton aria-label="Start">
            <svg width="16" height="16" viewBox="0 0 16 16" fill="#fff"><path d="M0 2.300l6.500-.9v6.200H0zM7.300 1.300L16 0v7.600H7.300zM0 8.400h6.500v6.200L0 13.700zM7.300 8.400H16V16l-8.700-1.300z" /></svg>
          </TaskButton>
          <SearchBox>
            <svg width="16" height="17" viewBox="0 0 16 17" fill="none" stroke="#222" strokeWidth="1.400"><circle cx="10" cy="6" r="5.200" /><path d="M6.300 9.700L.5 16" /></svg>
            <SearchInput placeholder="Type here to search" aria-label="Type here to search" />
          </SearchBox>
          <TaskButton aria-label="Cortana">
            <svg width="16" height="16" viewBox="0 0 16 16"><circle cx="8" cy="8" r="6.800" fill="none" stroke="#fff" strokeWidth="2" /></svg>
          </TaskButton>
          <TaskButton aria-label="Task View">
            <svg width="18" height="16" viewBox="0 0 18 16" fill="none" stroke="#fff"><path d="M1.500 0v3.500h10V0M1.500 5.500h10v5h-10zM1.500 16v-3.500h10V16M15.500 0v3M15.500 8v8" /><path d="M14 4h3v3h-3z" fill="#fff" stroke="none" /></svg>
          </TaskButton>
          <Apps>
            {apps.map((a) => (
              <TaskButton key={a.name} aria-label={a.name} $active={a.active} $running={a.running}>{a.icon}</TaskButton>
            ))}
          </Apps>
          <Tray>
            <TrayButton aria-label="Show hidden icons">
              <svg width="12" height="8" viewBox="0 0 12 8" fill="none" stroke="#fff" strokeWidth="1.300"><path d="M.5 7L6 1.500 11.500 7" /></svg>
            </TrayButton>
            <TrayButton aria-label="Battery">
              <svg width="16" height="12" viewBox="0 0 16 12" fill="none" stroke="#fff"><path d="M6 3.500h8.500v6H4.500M14.500 5.500h1v2h-1" /><path d="M1 2.500h4v2.500l-1 1H2l-1-1zM2 0v2.500M4 0v2.500M3 6v5.500h1.500" /></svg>
            </TrayButton>
            <TrayButton aria-label="Volume">
              <svg width="17" height="14" viewBox="0 0 17 14" fill="none" stroke="#fff"><path d="M.5 5h2.500l3.500-3v10L3 9H.5z" /><path d="M8.500 5a3 3 0 0 1 0 4M10.800 3.500a5 5 0 0 1 0 7M13.300 1.500a8 8 0 0 1 0 11" /></svg>
            </TrayButton>
            <TrayButton aria-label="Network">
              <svg width="17" height="14" viewBox="0 0 17 14" fill="none" stroke="#fff"><path d="M6.500 1.500h10v8h-13V7M9.500 9.500v3M6.500 13h7" /><path d="M.5.5h4v4h-4zM2.500 4.500V13H5" /></svg>
            </TrayButton>
            <TrayButton $w={32}>ENG</TrayButton>
            <Clock>14:52<br />23/10/2020</Clock>
            <Notifications $w={46} aria-label="Notifications">
              <svg width="26" height="26" viewBox="0 0 26 26">
                <path d="M3 3h16v12h-9l-4 4v-4H3z" fill="#fff" />
                <path d="M5 6.500h12M5 9h12M5 11.500h8" stroke="#1b2740" />
                <circle cx="18.500" cy="18" r="7.500" fill="#2a2f38" stroke="#8a8f98" />
                <text x="18.500" y="22" textAnchor="middle" fontSize="11" fontFamily="Noto Sans" fill="#fff">1</text>
              </svg>
            </Notifications>
          </Tray>
        </Taskbar>
      </Desktop>
    </>
  );
}
